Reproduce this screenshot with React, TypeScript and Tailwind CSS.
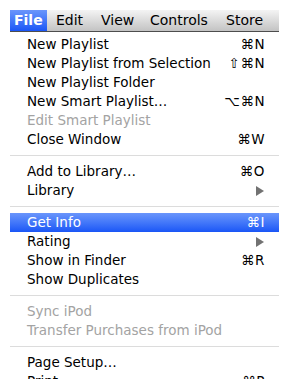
type Item = {
  label: string
  shortcut?: string
  disabled?: boolean
  submenu?: boolean
  active?: boolean
}

const groups: Item[][] = [
  [
    { label: 'New Playlist', shortcut: '⌘N' },
    { label: 'New Playlist from Selection', shortcut: '⇧⌘N' },
    { label: 'New Playlist Folder' },
    { label: 'New Smart Playlist…', shortcut: '⌥⌘N' },
    { label: 'Edit Smart Playlist', disabled: true },
    { label: 'Close Window', shortcut: '⌘W' },
  ],
  [
    { label: 'Add to Library…', shortcut: '⌘O' },
    { label: 'Library', submenu: true },
  ],
  [
    { label: 'Get Info', shortcut: '⌘I', active: true },
    { label: 'Rating', submenu: true },
    { label: 'Show in Finder', shortcut: '⌘R' },
    { label: 'Show Duplicates' },
  ],
  [
    { label: 'Sync iPod', disabled: true },
    { label: 'Transfer Purchases from iPod', disabled: true },
  ],
  [
    { label: 'Page Setup…' },
    { label: 'Print', shortcut: '⌘P' },
  ],
]

function Arrow() {
  return (
    <svg width="8" height="10" viewBox="0 0 8 10" className="mr-[1px]">
      <path d="M0 0 L8 5 L0 10 Z" fill="#727272" />
    </svg>
  )
}

function Row({ item }: { item: Item }) {
  const color = item.active
    ? 'text-white bg-gradient-to-b from-[#6a95fb] to-[#1a55f6]'
    : item.disabled
      ? 'text-[#a3a3a3]'
      : 'text-black'
  return (
    <div className={`flex h-[19px] items-center justify-between pl-[17px] pr-[14px] leading-none ${color}`}>
      <span>{item.label}</span>
      {item.shortcut && <span className="tracking-[0.5px]">{item.shortcut}</span>}
      {item.submenu && <Arrow />}
    </div>
  )
}

export default function App() {
  return (
    <div className="h-[389px] w-[289px] bg-white pl-[10px] pt-[10px]" style={{ fontFamily: '"DejaVu Sans", sans-serif' }}>
      <div className="h-[369px] w-[269px] overflow-hidden text-[13.5px]">
        {/* menu bar */}
        <div className="flex h-[22px] items-stretch border-b border-[#4d4d4d] bg-gradient-to-b from-[#f4f4f4] to-[#c3c3c3] text-[14px]">
          <div className="flex w-[37px] items-center bg-gradient-to-b from-[#6a95fb] to-[#1a55f6] pl-[4px] font-bold text-white">
            File
          </div>
          <div className="flex w-[44px] items-center pl-[9px] text-black">Edit</div>
          <div className="flex w-[50px] items-center pl-[10px] text-black">View</div>
          <div className="flex w-[75px] items-center pl-[9px] text-black">Controls</div>
          <div className="flex items-center pl-[10px] text-black">Store</div>
        </div>

        {/* dropdown */}
        <div className="bg-white pt-[3px]">
          {groups.map((g, i) => (
            <div key={i}>
              {i > 0 && <div className="my-[6px] h-px bg-[#dcdcdc]" />}
              {g.map((item) => (
                <Row key={item.label} item={item} />
              ))}
            </div>
          ))}
        </div>
      </div>
    </div>
  )
}
